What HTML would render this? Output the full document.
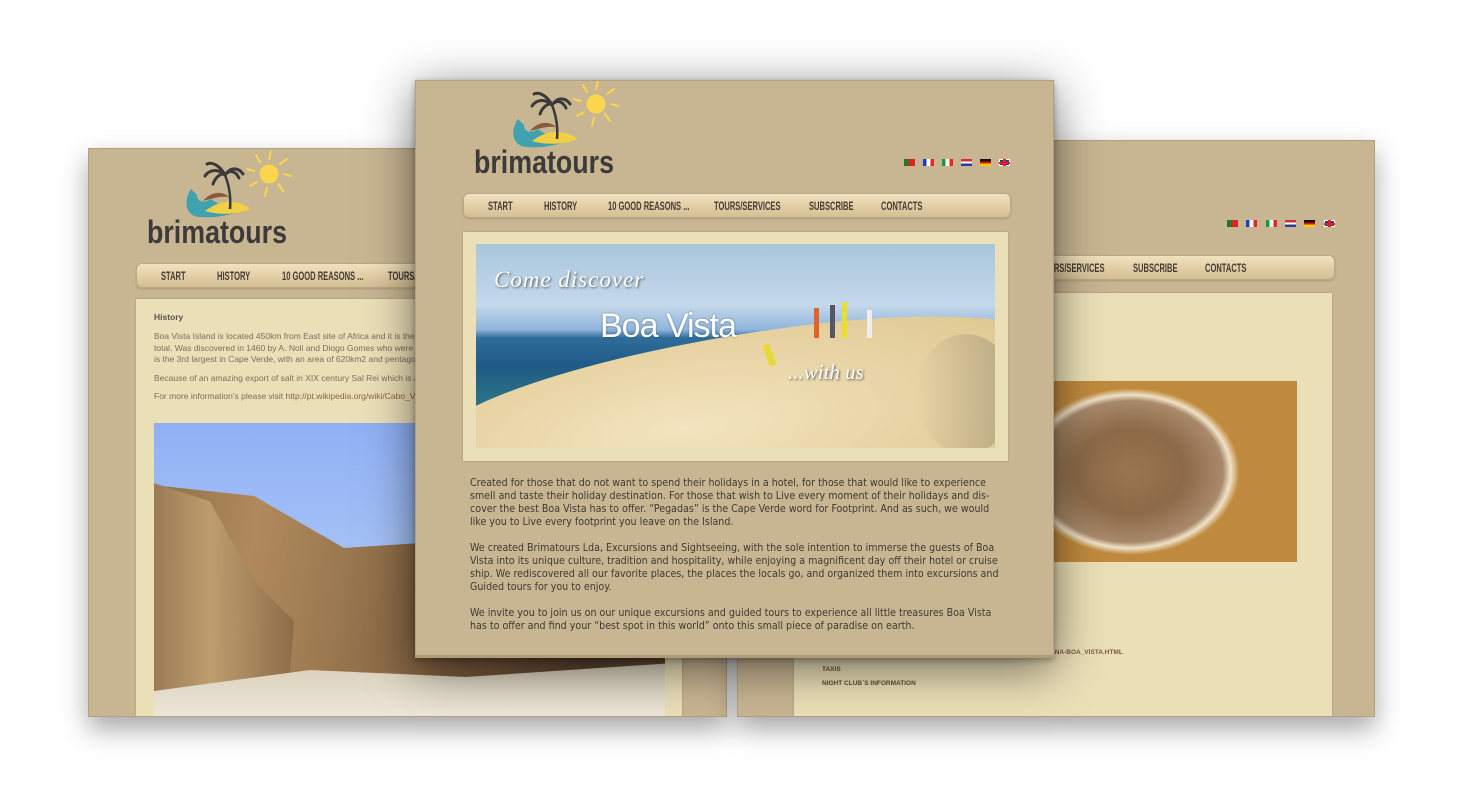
<!DOCTYPE html>
<html><head><meta charset="utf-8">
<style>
*{margin:0;padding:0;box-sizing:border-box}
body{width:1458px;height:789px;background:#fff;position:relative;overflow:hidden;font-family:"Liberation Sans",sans-serif}
.win{position:absolute;background:#c8b592;border:1px solid #b3a07c;overflow:hidden}
.nav{position:absolute;height:25px;border-radius:6px;background:linear-gradient(#f2e2bf,#e0cca3 60%,#d4bf95);border:1px solid #bba985;box-shadow:0 1px 2px rgba(0,0,0,.15)}
.nav span{position:absolute;display:block;top:5px;font-family:"Liberation Sans Narrow","Liberation Sans",sans-serif;font-weight:bold;font-size:12px;color:#453b33;transform:scaleX(.63);transform-origin:left top;white-space:nowrap}
.flags{position:absolute;height:7px}
.flags i{position:absolute;top:0;width:11px;height:7px;display:block}
.panel{position:absolute;background:#ebdfb7;box-shadow:0 0 2px rgba(0,0,0,.2)}
.logo{position:absolute;width:160px;height:100px}
</style></head><body>

<!-- LEFT WINDOW -->
<div class="win" style="left:88px;top:148px;width:639px;height:569px;box-shadow:0 12px 25px rgba(0,0,0,.35)">
  <svg class="logo" style="left:50px;top:2px" viewBox="0 0 160 100">
    <g stroke="#fbd54c" stroke-width="2" stroke-linecap="round">
      <line x1="130" y1="8" x2="132" y2="0"/><line x1="141" y1="13" x2="148" y2="8"/><line x1="145" y1="23" x2="152" y2="25"/><line x1="139" y1="33" x2="144" y2="40"/><line x1="128" y1="37" x2="126" y2="45"/><line x1="118" y1="31" x2="111" y2="35"/><line x1="115" y1="20" x2="108" y2="18"/><line x1="121" y1="11" x2="117" y2="4"/>
    </g>
    <circle cx="130" cy="23" r="9.5" fill="#fbd54c"/>
    <path d="M52 38 C44 50 46 66 62 66 C78 68 96 62 112 58 C96 58 82 56 72 48 C66 52 58 52 58 44 Z" fill="#3fa2ae"/>
    <path d="M66 60 C82 48 98 48 112 58 C96 64 80 64 66 60Z" fill="#f2cf45"/>
    <path d="M64 50 C72 40 84 40 90 46 C80 45 72 48 64 50Z" fill="#8a5a3c"/>
    <path d="M91 58 C92 46 90 34 86 24" stroke="#3a3a3a" stroke-width="2.5" fill="none"/>
    <path d="M86 24 C78 17 70 19 66 25 M86 24 C80 13 72 11 68 13 M86 24 C92 15 100 17 104 23 M86 24 C90 19 96 19 100 27 M86 24 C82 21 76 27 74 33" stroke="#3a3a3a" stroke-width="3" fill="none" stroke-linecap="round"/>
    <text x="8" y="92" font-family="Liberation Sans,sans-serif" font-size="32" font-weight="bold" fill="#3d3b3a" textLength="140" lengthAdjust="spacingAndGlyphs">brimatours</text>
  </svg>
  <div class="nav" style="left:47px;top:114px;width:600px">
    <span style="left:24px">START</span><span style="left:80px">HISTORY</span><span style="left:145px">10 GOOD REASONS ...</span><span style="left:251px">TOURS/SERVICES</span>
  </div>
  <div class="panel" style="left:47px;top:150px;width:546px;height:430px">
    <div style="position:absolute;left:18px;top:13px;font-size:8.5px;color:#555;font-weight:bold">History</div>
    <div style="position:absolute;left:18px;top:32px;font-size:8.5px;color:#7a6f5e;line-height:11.5px;white-space:nowrap">
      Boa Vista Island is located 450km from East site of Africa and it is the<br>total. Was discovered in 1460 by A. Noli and Diogo Gomes who were<br>is the 3rd largest in Cape Verde, with an area of 620km2 and pentago
      <div style="margin-top:7px">Because of an amazing export of salt in XIX century Sal Rei which is a</div>
      <div style="margin-top:7px">For more information's please visit <span style="color:#8a6540">http://pt.wikipedia.org/wiki/Cabo_Verde</span></div>
    </div>
    <div style="position:absolute;left:18px;top:124px;width:511px;height:300px;overflow:hidden;background:linear-gradient(180deg,#8fb0f5,#a3c0f5 40%)">
      <div style="position:absolute;left:-20px;top:60px;width:600px;height:260px;background:linear-gradient(100deg,#8a6a45,#b08a5c 20%,#9a7850 35%,#7a5a3c 55%,#5a4230 75%,#6a4e38);clip-path:polygon(0 0,20% 5%,35% 25%,55% 22%,75% 30%,100% 40%,100% 100%,0 100%)"></div>
      <div style="position:absolute;left:0;top:60px;width:140px;height:230px;background:linear-gradient(90deg,#9b7b55,#c0a070 40%,#8a6a48);clip-path:polygon(0 0,40% 8%,60% 30%,75% 45%,100% 60%,95% 100%,0 100%);opacity:.9"></div>
      <div style="position:absolute;left:0;top:240px;width:520px;height:70px;background:linear-gradient(#d9cfba,#f3eee2);clip-path:polygon(0 40%,30% 10%,60% 20%,100% 0,100% 100%,0 100%)"></div>
    </div>
  </div>
</div>

<!-- RIGHT WINDOW -->
<div class="win" style="left:737px;top:140px;width:638px;height:577px;box-shadow:0 12px 25px rgba(0,0,0,.35)">
  <div class="flags" style="left:489px;top:79px;width:110px">
    <i style="left:0;background:linear-gradient(90deg,#1c7a2e 40%,#d22 40%)"></i>
    <i style="left:19px;background:linear-gradient(90deg,#1d3ec0 33%,#fff 33%,#fff 66%,#e22 66%)"></i>
    <i style="left:39px;background:linear-gradient(90deg,#1a9a3e 33%,#fff 33%,#fff 66%,#e22 66%)"></i>
    <i style="left:58px;background:linear-gradient(#c33 33%,#fff 33%,#fff 66%,#2a3f9c 66%)"></i>
    <i style="left:77px;background:linear-gradient(#111 33%,#d11 33%,#d11 66%,#fc0 66%)"></i>
    <i style="left:97px;background:#273e8e;box-shadow:inset 0 0 0 1px #fff"><b style="position:absolute;left:4px;top:0;width:3px;height:7px;background:#d22"></b><b style="position:absolute;left:0;top:2.5px;width:11px;height:2px;background:#d22"></b></i>
  </div>
  <div class="nav" style="left:24px;top:114px;width:573px">
    <span style="left:275px">TOURS/SERVICES</span><span style="left:370px">SUBSCRIBE</span><span style="left:442px">CONTACTS</span>
  </div>
  <div class="panel" style="left:56px;top:152px;width:538px;height:430px">
    <div style="position:absolute;left:200px;top:88px;width:303px;height:181px;background:radial-gradient(ellipse 36% 46% at 45% 50%,#9a7550 0%,#8d6a48 50%,#a8896a 85%,#efe2c8 92%,#c08a3e 100%),linear-gradient(#c48a3a,#b47a2c)"></div>
    <div style="position:absolute;left:28px;top:370px;font-family:'Liberation Sans Narrow',sans-serif;font-size:6.5px;font-weight:bold;color:#5a4a3a;line-height:14px">TAXIS<br>NIGHT CLUB`S INFORMATION</div>
    <div style="position:absolute;left:256px;top:356px;font-family:'Liberation Sans Narrow',sans-serif;font-size:6.5px;font-weight:bold;color:#7a5a40">ANA-BOA_VISTA.HTML</div>
  </div>
</div>

<!-- FRONT WINDOW -->
<div class="win" style="left:415px;top:80px;width:639px;height:578px;box-shadow:0 10px 45px rgba(0,0,0,.55),0 2px 6px rgba(0,0,0,.3);border-bottom:3px solid #b09d78">
  <svg class="logo" style="left:50px;top:0px" viewBox="0 0 160 100">
    <g stroke="#fbd54c" stroke-width="2" stroke-linecap="round">
      <line x1="130" y1="8" x2="132" y2="0"/><line x1="141" y1="13" x2="148" y2="8"/><line x1="145" y1="23" x2="152" y2="25"/><line x1="139" y1="33" x2="144" y2="40"/><line x1="128" y1="37" x2="126" y2="45"/><line x1="118" y1="31" x2="111" y2="35"/><line x1="115" y1="20" x2="108" y2="18"/><line x1="121" y1="11" x2="117" y2="4"/>
    </g>
    <circle cx="130" cy="23" r="9.5" fill="#fbd54c"/>
    <path d="M52 38 C44 50 46 66 62 66 C78 68 96 62 112 58 C96 58 82 56 72 48 C66 52 58 52 58 44 Z" fill="#3fa2ae"/>
    <path d="M66 60 C82 48 98 48 112 58 C96 64 80 64 66 60Z" fill="#f2cf45"/>
    <path d="M64 50 C72 40 84 40 90 46 C80 45 72 48 64 50Z" fill="#8a5a3c"/>
    <path d="M91 58 C92 46 90 34 86 24" stroke="#3a3a3a" stroke-width="2.5" fill="none"/>
    <path d="M86 24 C78 17 70 19 66 25 M86 24 C80 13 72 11 68 13 M86 24 C92 15 100 17 104 23 M86 24 C90 19 96 19 100 27 M86 24 C82 21 76 27 74 33" stroke="#3a3a3a" stroke-width="3" fill="none" stroke-linecap="round"/>
    <text x="8" y="92" font-family="Liberation Sans,sans-serif" font-size="32" font-weight="bold" fill="#3d3b3a" textLength="140" lengthAdjust="spacingAndGlyphs">brimatours</text>
  </svg>
  <div class="flags" style="left:488px;top:78px;width:110px">
    <i style="left:0;background:linear-gradient(90deg,#1c7a2e 40%,#d22 40%)"></i>
    <i style="left:19px;background:linear-gradient(90deg,#1d3ec0 33%,#fff 33%,#fff 66%,#e22 66%)"></i>
    <i style="left:38px;background:linear-gradient(90deg,#1a9a3e 33%,#fff 33%,#fff 66%,#e22 66%)"></i>
    <i style="left:57px;background:linear-gradient(#c33 33%,#fff 33%,#fff 66%,#2a3f9c 66%)"></i>
    <i style="left:76px;background:linear-gradient(#111 33%,#d11 33%,#d11 66%,#fc0 66%)"></i>
    <i style="left:95px;background:#273e8e;box-shadow:inset 0 0 0 1px #fff"><b style="position:absolute;left:4px;top:0;width:3px;height:7px;background:#d22"></b><b style="position:absolute;left:0;top:2.5px;width:11px;height:2px;background:#d22"></b></i>
  </div>
  <div class="nav" style="left:47px;top:112px;width:548px">
    <span style="left:24px">START</span><span style="left:80px">HISTORY</span><span style="left:144px">10 GOOD REASONS ...</span><span style="left:250px">TOURS/SERVICES</span><span style="left:345px">SUBSCRIBE</span><span style="left:417px">CONTACTS</span>
  </div>
  <div class="panel" style="left:47px;top:151px;width:545px;height:229px">
    <div style="position:absolute;left:13px;top:12px;width:519px;height:204px;overflow:hidden;background:linear-gradient(180deg,#a9c6dc 0%,#c4d8ea 30%,#8fb4dc 42%,#2f6d9a 46%,#1f5a86 60%,#2a7088 75%)">
      <div style="position:absolute;left:-60px;top:88px;width:680px;height:220px;background:radial-gradient(ellipse at 40% 40%,#f3e4bf,#e2cc98 60%,#c9b07a);border-radius:60% 40% 0 0/40% 30% 0 0;transform:rotate(-7deg)"></div>
      <div style="position:absolute;left:440px;top:90px;width:100px;height:120px;background:linear-gradient(90deg,rgba(150,140,120,0),rgba(140,130,110,.5));border-radius:50%"></div>
      <div style="position:absolute;left:18px;top:23px;font-family:'Liberation Serif',serif;font-style:italic;font-size:23px;color:#fff;text-shadow:1px 1px 2px #555;letter-spacing:1px">Come discover</div>
      <div style="position:absolute;left:124px;top:63px;font-size:34px;color:#fff;letter-spacing:-1px;text-shadow:0 0 2px rgba(0,0,0,.4)">Boa Vista</div>
      <div style="position:absolute;left:312px;top:116px;font-family:'Liberation Serif',serif;font-style:italic;font-size:21px;color:#fff;text-shadow:1px 1px 2px #555">...with us</div>
      <div style="position:absolute;left:338px;top:64px;width:5px;height:30px;background:#e0642a"></div>
      <div style="position:absolute;left:354px;top:61px;width:5px;height:33px;background:#556"></div>
      <div style="position:absolute;left:366px;top:58px;width:5px;height:36px;background:#e8e030"></div>
      <div style="position:absolute;left:391px;top:66px;width:5px;height:28px;background:#eee"></div>
      <div style="position:absolute;left:290px;top:100px;width:7px;height:22px;background:#e9d83a;transform:rotate(-20deg)"></div>
    </div>
  </div>
  <div style="position:absolute;left:54px;top:396px;width:534px;font-family:'DejaVu Sans Condensed','Liberation Sans Narrow',sans-serif;font-size:10.6px;line-height:13px;color:#3e3a33">
    <p>Created for those that do not want to spend their holidays in a hotel, for those that would like to experience smell and taste their holiday destination. For those that wish to Live every moment of their holidays and dis-cover the best Boa Vista has to offer. “Pegadas” is the Cape Verde word for Footprint. And as such, we would like you to Live every footprint you leave on the Island.</p>
    <p style="margin-top:13px">We created Brimatours Lda, Excursions and Sightseeing, with the sole intention to immerse the guests of Boa Vista into its unique culture, tradition and hospitality, while enjoying a magnificent day off their hotel or cruise ship. We rediscovered all our favorite places, the places the locals go, and organized them into excursions and Guided tours for you to enjoy.</p>
    <p style="margin-top:13px">We invite you to join us on our unique excursions and guided tours to experience all little treasures Boa Vista has to offer and find your “best spot in this world” onto this small piece of paradise on earth.</p>
  </div>
</div>
</body></html>
